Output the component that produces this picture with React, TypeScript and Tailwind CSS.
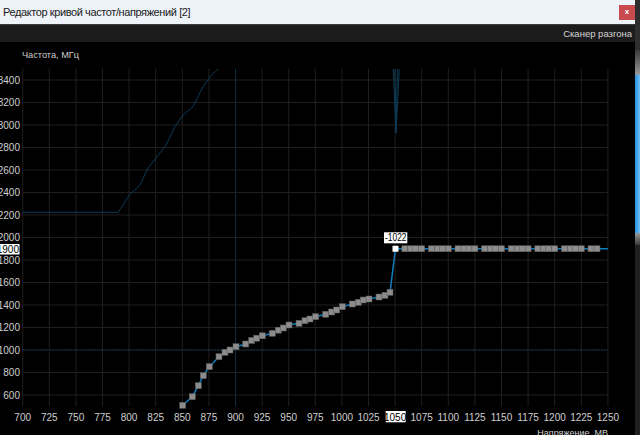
import React from "react";

// Chart geometry (page pixels)
const X0 = 22.7;
const PX_PER_MV = 1.064;
const Y0 = 80; // 3400 MHz
const PX_PER_MHZ = 0.1125;
const xv = (v: number) => X0 + (v - 700) * PX_PER_MV;
const yf = (f: number) => Y0 + (3400 - f) * PX_PER_MHZ;

const TOP = yf(3500);
const BOTTOM = yf(500);
const RIGHT = xv(1250);

const voltTicks = Array.from({ length: 23 }, (_, i) => 700 + i * 25);
const freqTicks = Array.from({ length: 15 }, (_, i) => 600 + i * 200);

const curve: [number, number][] = [
  [182.7, 405.3], [192.3, 396.7], [198.3, 385.7], [203.3, 375.7],
  [209.3, 366.7], [219, 356.7], [225, 352.3], [230, 350],
  [236, 346.7], [245.7, 344], [251.7, 340.5], [256.7, 338.2],
  [262.3, 335.8], [272.3, 333.3], [278.3, 330.2], [283.3, 328],
  [289, 325], [299, 323.3], [305, 320.7], [310, 319],
  [315.7, 316.7], [325.7, 314.3], [331.7, 312], [336.7, 310],
  [342.3, 306.7], [352.3, 304], [358.3, 302.3], [363.3, 300],
  [369, 299], [379, 297], [385, 295.3], [390, 292.3],
];

const ACTIVE: [number, number] = [395.5, yf(1900)];

const flat: number[] = [];
for (let v = 1050; v < 1250; v += 25) {
  for (const o of [0, 9.7, 15.7, 20.7]) {
    const x = xv(v) + o;
    if (o === 0 && v === 1050) continue;
    if (x <= 600) flat.push(x);
  }
}

const ghost =
  "M22.7,212.3 L118.3,212.3 L129.3,195 L140,185 L148,168 L156,158 L166,145 L175,126.7 L183,115 L193,106.7 L203,86.7 L210,76.7 L218,69";

function Chart() {
  const linePts = [...curve, ACTIVE, [RIGHT, ACTIVE[1]] as [number, number]]
    .map(([x, y]) => `${x},${y}`)
    .join(" ");

  return (
    <svg
      viewBox="0 42 635 393"
      width={635}
      height={393}
      className="block"
      style={{ fontFamily: '"Liberation Sans", Arial, sans-serif' }}
    >
      {/* grid */}
      {voltTicks.map((v) => (
        <line
          key={`v${v}`}
          x1={xv(v)}
          x2={xv(v)}
          y1={TOP}
          y2={BOTTOM}
          stroke={v === 900 ? "#0b2c42" : "#1f1f1f"}
          strokeWidth={1}
        />
      ))}
      {freqTicks.map((f) => (
        <line
          key={`f${f}`}
          x1={X0}
          x2={RIGHT}
          y1={yf(f)}
          y2={yf(f)}
          stroke="#1f1f1f"
          strokeWidth={1}
        />
      ))}
      <line
        x1={X0}
        x2={RIGHT}
        y1={yf(1000)}
        y2={yf(1000)}
        stroke="#0f4d72"
        strokeWidth={1}
        strokeDasharray="1 2"
      />

      {/* background curves */}
      <path d={ghost} fill="none" stroke="#0c3a55" strokeWidth={1} />
      <path
        d="M393.3,69 L396,133 L399.3,69 M395,69 L396,133 L397.5,69"
        fill="none"
        stroke="#0c3a55"
        strokeWidth={1}
      />

      {/* main curve */}
      <polyline points={linePts} fill="none" stroke="#0b7fc2" strokeWidth={1.5} />
      {curve.map(([x, y], i) => (
        <rect key={i} x={x - 3} y={y - 3} width={6} height={6} fill="#8c8c8c" stroke="#5a5a5a" strokeWidth={0.5} />
      ))}
      {flat.map((x, i) => (
        <rect key={`p${i}`} x={x - 3} y={ACTIVE[1] - 3} width={6} height={6} fill="#8c8c8c" stroke="#5a5a5a" strokeWidth={0.5} />
      ))}
      <rect x={ACTIVE[0] - 3} y={ACTIVE[1] - 3} width={6} height={6} fill="#ffffff" />

      {/* offset tag */}
      <rect x={384} y={232.3} width={23.3} height={11} fill="#ffffff" />
      <text
        x={385}
        y={241.3}
        fontSize={10}
        fill="#000"
        textLength={21.5}
        lengthAdjust="spacingAndGlyphs"
      >
        -1022
      </text>

      {/* y labels */}
      {freqTicks.map((f) =>
        f === 1900 ? null : (
          <text key={`yl${f}`} x={20} y={yf(f) + 3.6} fontSize={10} fill="#cfcfcf" textAnchor="end">
            {f}
          </text>
        )
      )}
      <rect x={0} y={244} width={19.5} height={10.5} fill="#ffffff" />
      <text x={19} y={252.6} fontSize={10} fill="#000" textAnchor="end">
        1900
      </text>

      {/* x labels */}
      {voltTicks.map((v) =>
        v === 1050 ? (
          <g key={`xl${v}`}>
            <rect x={385.7} y={411} width={20} height={11.3} fill="#ffffff" />
            <text x={xv(v)} y={420.5} fontSize={10} fill="#000" textAnchor="middle">
              {v}
            </text>
          </g>
        ) : (
          <text key={`xl${v}`} x={xv(v)} y={420.5} fontSize={10} fill="#cfcfcf" textAnchor="middle">
            {v}
          </text>
        )
      )}

      <text x={22} y={57.5} fontSize={9.2} fill="#cfcfcf">
        Частота, МГц
      </text>
      <text x={608} y={435.5} fontSize={9} fill="#cfcfcf" textAnchor="end">
        Напряжение, МВ
      </text>
    </svg>
  );
}

export default function App() {
  return (
    <div className="flex w-[640px] h-[435px] overflow-hidden bg-black">
      <div className="flex flex-col w-[635px]">
        {/* Title bar */}
        <div className="h-[24px] bg-[#eef2f9] flex items-center justify-between pl-[3px] pr-0">
          <span className="text-[11px] tracking-[-0.4px] text-[#1a1a1a] font-['Liberation_Sans',sans-serif] leading-none">
            Редактор кривой частот/напряжений [2]
          </span>
          <div className="w-[16px] h-[15px] bg-[#c94a4f] flex items-center justify-center text-white text-[8px] leading-none font-bold font-['Liberation_Sans',sans-serif]">
            x
          </div>
        </div>
        {/* Toolbar */}
        <div className="h-[18px] bg-[#1c1c1c] border-t border-[#3a3a3a] flex items-center justify-end pr-[3px]">
          <span className="text-[9.5px] text-[#d4d4d4] font-['Liberation_Sans',sans-serif] leading-none">
            Сканер разгона
          </span>
        </div>
        <Chart />
      </div>
      {/* side scroll strip */}
      <div className="w-[5px] flex flex-col bg-[#262626]">
        <div className="h-[50px] bg-[#2e2e2e]" />
        <div className="h-[25px] bg-gradient-to-b from-[#3a3a3a] to-[#9a9a9a]" />
        <div className="h-[158px] bg-gradient-to-r from-[#1f8fdc] to-[#6cc2f5]" />
        <div className="h-[12px] bg-gradient-to-b from-[#9a9a9a] to-[#3a3a3a]" />
        <div className="flex-1 bg-[#202020]" />
      </div>
    </div>
  );
}
